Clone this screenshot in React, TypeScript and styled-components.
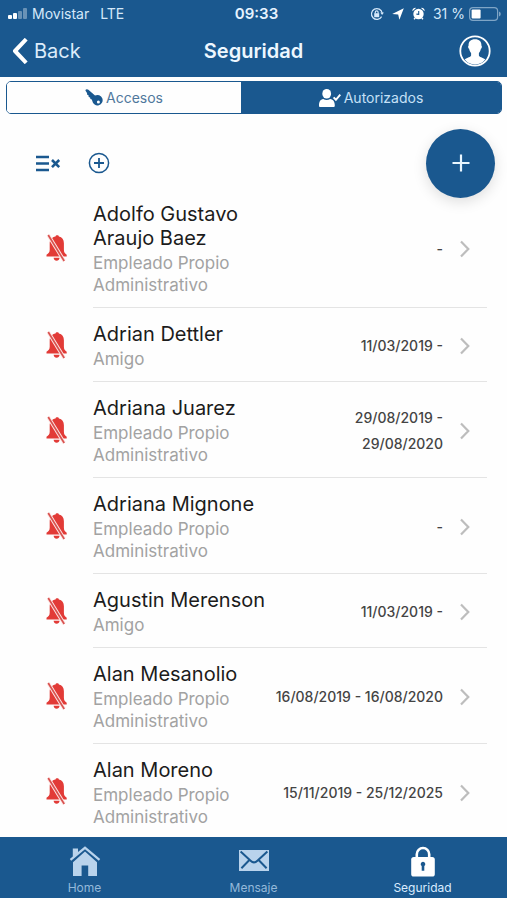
import React from "react";
import styled, { createGlobalStyle } from "styled-components";

const blue = "#1a588f";
const pale = "#b9d3ec";

const GlobalStyle = createGlobalStyle`
  * { box-sizing: border-box; }
  body { margin: 0; background: #fefefe; font-family: Inter, "Liberation Sans", sans-serif; }
  button { font: inherit; border: 0; padding: 0; background: none; color: inherit; cursor: pointer; }
  svg { display: block; flex: none; }
`;

const Page = styled.div`
  min-height: 100vh;
  display: flex;
  flex-direction: column;
  padding-bottom: 2px;
`;

const Header = styled.header`
  background: ${blue};
  color: #fff;
`;

const ThreeColumns = styled.div`
  display: grid;
  grid-template-columns: 1fr auto 1fr;
  align-items: center;
`;

const StatusBar = styled(ThreeColumns)`
  height: 27px;
  padding: 0 6px 0 8px;
  font-size: 14px;
  color: #d5e8fa;
`;

const StatusGroup = styled.div<{ $end?: boolean }>`
  display: flex;
  align-items: center;
  justify-content: ${(p) => (p.$end ? "flex-end" : "flex-start")};
  gap: 4px;
  white-space: nowrap;
`;

const Network = styled.span`
  margin-left: 7px;
`;

const Clock = styled.time`
  padding-left: 4px;
  font-size: 15px;
  font-weight: 600;
  color: #e6f3ff;
`;

const StatusIcons = styled.div`
  display: flex;
  align-items: center;
  gap: 8px;
  margin-right: 4px;
`;

const TitleBar = styled(ThreeColumns)`
  height: 50px;
  padding: 0 12px 2px;
`;

const BackButton = styled.button`
  display: flex;
  align-items: center;
  gap: 6px;
  justify-self: start;
  font-size: 20px;
  color: #dcecfb;
`;

const Title = styled.h1`
  margin: 0;
  font-size: 20px;
  font-weight: 600;
  color: #eef7ff;
`;

const ProfileButton = styled.button`
  justify-self: end;
  margin-right: 4px;
`;

const Segments = styled.div`
  display: flex;
  height: 33px;
  margin: 4px 5px 0 6px;
  border: 1px solid ${blue};
  border-radius: 5px;
  overflow: hidden;
`;

const Segment = styled.button<{ $active?: boolean }>`
  flex: ${(p) => (p.$active ? "10 1 0" : "9 1 0")};
  display: flex;
  align-items: center;
  justify-content: center;
  gap: 3px;
  font-size: 14px;
  background: ${(p) => (p.$active ? blue : "#fefefe")};
  color: ${(p) => (p.$active ? "#c5e0f7" : "#50789c")};
  & svg { color: ${(p) => (p.$active ? "#fff" : blue)}; }
`;

const Toolbar = styled.div`
  display: flex;
  align-items: center;
  gap: 27px;
  height: 50px;
  margin-top: 24px;
  padding: 0 12px 0 35px;
  color: ${blue};
`;

const ToolButton = styled.button`
  display: flex;
`;

const AddButton = styled.button`
  display: grid;
  place-items: center;
  flex: none;
  width: 69px;
  height: 69px;
  margin-left: auto;
  border-radius: 50%;
  background: ${blue};
  color: #fff;
  box-shadow: 0 4px 14px rgba(0, 0, 0, 0.13);
`;

const List = styled.ul`
  flex: 1;
  margin: 0;
  padding: 0;
  list-style: none;
`;

const Row = styled.li`
  display: flex;
  align-items: center;
  padding: 0 20px 0 46px;
`;

const RowBody = styled.div<{ $last?: boolean }>`
  flex: 1;
  display: flex;
  align-items: center;
  min-width: 0;
  margin-left: 26px;
  padding: 14px 17px ${(p) => (p.$last ? "9px" : "11px")} 0;
  border-bottom: ${(p) => (p.$last ? "0" : "1px solid #e4e4e4")};
`;

const Person = styled.div`
  flex: none;
  width: 180px;
`;

const Name = styled.h2`
  margin: 0 0 2px;
  font-size: 20px;
  line-height: 24px;
  font-weight: 400;
  color: #1c1c1c;
`;

const Role = styled.p`
  margin: 0;
  font-size: 17px;
  line-height: 22px;
  color: #a2a2a2;
`;

const Dates = styled.div`
  flex: 1;
  margin-right: 17px;
  text-align: right;
  font-size: 14px;
  font-weight: 500;
  line-height: 26px;
  color: #444;
  white-space: pre;
`;

const TabBar = styled.nav`
  display: grid;
  grid-template-columns: repeat(3, 1fr);
  height: 61px;
  background: ${blue};
`;

const Tab = styled.a<{ $active?: boolean }>`
  display: flex;
  flex-direction: column;
  align-items: center;
  justify-content: flex-end;
  gap: 3px;
  padding-bottom: 2px;
  font-size: 12px;
  line-height: 16px;
  text-decoration: none;
  color: ${(p) => (p.$active ? "#d9ecff" : "#94b9da")};
  & svg { color: ${(p) => (p.$active ? "#fff" : pale)}; }
`;

const SignalIcon = () => (
  <svg width="20" height="12" viewBox="0 0 20 12" fill="#fff">
    <rect x="0" y="7" width="4" height="4" rx="1" />
    <rect x="5" y="5" width="4" height="6" rx="1" />
    <rect x="10" y="3" width="4" height="8" rx="1" opacity=".35" />
    <rect x="15" y="0" width="4" height="11" rx="1" opacity=".35" />
  </svg>
);

const RotationLockIcon = () => (
  <svg width="14" height="14" viewBox="0 0 14 14" fill="none" stroke="currentColor" strokeWidth="1.2">
    <path d="M11.6 9.6A5.4 5.4 0 1 1 12.2 6" />
    <path d="M10.3 5.6h3.6l-1.8 2.5z" fill="currentColor" stroke="none" />
    <rect x="4.2" y="6.2" width="5" height="4" fill="currentColor" stroke="none" />
    <path d="M5.3 6.4V5.2a1.4 1.4 0 0 1 2.8 0v1.2" />
  </svg>
);

const LocationIcon = () => (
  <svg width="12" height="12" viewBox="0 0 12 12" fill="#fff">
    <path d="M11.800.2 7.400 11.800 6.200 6.600.2 6z" />
  </svg>
);

const AlarmIcon = () => (
  <svg width="13" height="13" viewBox="0 0 13 13">
    <g fill="#fff">
      <circle cx="6.5" cy="7" r="5.2" />
      <path d="M.4 4.2A3 3 0 0 1 4 .9zM12.6 4.2A3 3 0 0 0 9 .9zM2.8 10.6l1 1-1.3 1.2-1-1zM10.2 10.6l-1 1 1.3 1.2 1-1z" />
    </g>
    <path d="M6.7 4v3.3L4.4 7.1" fill="none" stroke={blue} strokeWidth="1.1" />
  </svg>
);

const BatteryIcon = () => (
  <svg width="32" height="14" viewBox="0 0 32 14">
    <rect x=".6" y=".6" width="28" height="12.8" rx="3.4" fill="none" stroke="#7fa5c6" strokeWidth="1.2" />
    <rect x="2.6" y="2.4" width="9" height="9.2" rx="1" fill="#fff" />
    <path d="M30 4.6q1.8.6 1.8 2.4T30 9.4z" fill="#7fa5c6" />
  </svg>
);

const BackIcon = () => (
  <svg width="16" height="26" viewBox="0 0 16 26" fill="none" stroke="#fff" strokeWidth="4" strokeLinejoin="round">
    <path d="M14.2 1.2 3 13l11.2 11.8" />
  </svg>
);

const ProfileIcon = () => (
  <svg width="32" height="32" viewBox="0 0 32 32">
    <circle cx="16" cy="16" r="14.7" fill="none" stroke="#fff" strokeWidth="1.8" />
    <path
      d="M16 4.200c4.400 0 6.600 2.500 6.400 6.200.8.5.6 2.700-.5 3.400-.3 2-1.200 3.300-2 4.200v2.600c.2 1.600 3.800 1.800 6.400 4A13 13 0 0 1 16 29.500 13 13 0 0 1 5.700 24.600c2.600-2.200 6.200-2.400 6.400-4V18c-.8-.9-1.700-2.200-2-4.200-1.100-.7-1.300-2.900-.5-3.400-.2-3.700 2-6.200 6.400-6.200z"
      fill="#fff"
    />
  </svg>
);

const KeyIcon = () => (
  <svg width="18" height="18" viewBox="0 0 18 18">
    <path
      d="M.4 1.600Q.6.3 2 .3L3.400.8 10 6.600A5.200 5.200 0 1 1 7.300 12L6.800 10.400 5.400 10 5.100 8.400 3.700 8 3.500 6.200 2.200 5.800 2 3.900z"
      fill="currentColor"
    />
    <circle cx="13.400" cy="13" r="1.500" fill="#fff" />
  </svg>
);

const PersonCheckIcon = () => (
  <svg width="22" height="18" viewBox="0 0 22 18" fill="currentColor">
    <rect x="3.400" y="0" width="8.600" height="9.400" rx="4.200" />
    <path d="M0 16.400c0-3.600 1.200-6 4.300-6.400 2 1.200 4.800 1.200 6.800 0 3.300.4 4.700 2.800 4.700 6.400 0 1-.5 1.500-1.400 1.500h-13C.4 17.900 0 17.400 0 16.400z" />
    <path d="m14.600 8.400 2.300 2.400 4.400-5.200" fill="none" stroke="currentColor" strokeWidth="2" />
  </svg>
);

const ListClearIcon = () => (
  <svg width="26" height="17" viewBox="0 0 26 17" fill="none" stroke="currentColor">
    <path d="M1 2h13M1 8.500h13M1 15h13" strokeWidth="2.400" />
    <path d="m17 5 7.200 7.200M24.200 5 17 12.200" strokeWidth="2.600" />
  </svg>
);

const CirclePlusIcon = () => (
  <svg width="22" height="22" viewBox="0 0 22 22" fill="none" stroke="currentColor" strokeWidth="1.500">
    <circle cx="11" cy="11" r="9.600" />
    <path d="M11 6v10M6 11h10" strokeWidth="1.800" />
  </svg>
);

const PlusIcon = () => (
  <svg width="18" height="18" viewBox="0 0 18 18" fill="none" stroke="#e9f6ff" strokeWidth="2.200">
    <path d="M9 .5v17M.5 9h17" />
  </svg>
);

const BellOffIcon = () => (
  <svg width="21" height="28" viewBox="0 0 21 28">
    <path
      d="M11.200 1.200c1 0 1.600.5 1.700 1.300 3.200.7 5 3.200 5 6.800v6.400c0 2.600 1 3.800 2.800 5.100v1.800H.5v-1.800c1.900-1.300 3.200-2.500 3.200-5.100V9.300c0-3.600 2.400-6.100 5.800-6.800.1-.8.7-1.300 1.700-1.300zM7.600 23.700h6c-.2 2-1.400 3-3 3s-2.800-1-3-3z"
      fill="#e23b37"
    />
    <path d="M2.200 1 18.200 27" stroke="#fde9e8" strokeWidth="3.600" />
    <path d="M2.200 1 18.200 27" stroke="#d9524f" strokeWidth="1.700" />
  </svg>
);

const ChevronIcon = () => (
  <svg width="10" height="18" viewBox="0 0 10 18" fill="none" stroke="#bdbdbd" strokeWidth="2.200">
    <path d="m1 1.500 7.300 7.500L1 16.500" />
  </svg>
);

const HomeIcon = () => (
  <svg width="32" height="31" viewBox="0 0 32 31" fill="currentColor">
    <path d="M16 5.500 28 16.200V30h-8.800V19.500h-6.600V30H4V16.200z" />
    <path d="M16 .3 31.200 13l-1.400 1.700L16 3.200 2.200 14.700.8 13l3-2.600V2.600H9v3.500z" />
  </svg>
);

const MailIcon = () => (
  <svg width="32" height="31" viewBox="0 0 32 31">
    <rect x="1" y="4" width="30" height="21" fill="currentColor" />
    <path
      d="M2.600 5.600 12.600 14.800Q16 18 19.400 14.800L29.400 5.600M3.400 22.200 11.400 14M28.600 22.200 20.600 14"
      fill="none"
      stroke={blue}
      strokeWidth="2"
    />
  </svg>
);

const LockIcon = () => (
  <svg width="26" height="31" viewBox="0 0 26 31">
    <path d="M6.800 13V8.200a6.200 6.200 0 0 1 12.400 0V13" fill="none" stroke="currentColor" strokeWidth="2.600" />
    <rect x="1.200" y="11" width="23.600" height="19.500" rx="2.600" fill="currentColor" />
    <path d="M13 15.800a2.300 2.300 0 0 1 1.300 4.200v4.800h-2.600V20a2.300 2.300 0 0 1 1.300-4.200z" fill={blue} />
  </svg>
);

const employee = ["Empleado Propio", "Administrativo"];

const people = [
  { name: "Adolfo Gustavo Araujo Baez", role: employee, dates: "-" },
  { name: "Adrian Dettler", role: ["Amigo"], dates: "11/03/2019 -" },
  { name: "Adriana Juarez", role: employee, dates: "29/08/2019 -\n29/08/2020" },
  { name: "Adriana Mignone", role: employee, dates: "-" },
  { name: "Agustin Merenson", role: ["Amigo"], dates: "11/03/2019 -" },
  { name: "Alan Mesanolio", role: employee, dates: "16/08/2019 - 16/08/2020" },
  { name: "Alan Moreno", role: employee, dates: "15/11/2019 - 25/12/2025" },
];

export default function App() {
  return (
    <Page>
      <GlobalStyle />
      <Header>
        <StatusBar>
          <StatusGroup>
            <SignalIcon />
            <span>Movistar</span>
            <Network>LTE</Network>
          </StatusGroup>
          <Clock>09:33</Clock>
          <StatusGroup $end>
            <StatusIcons>
              <RotationLockIcon />
              <LocationIcon />
              <AlarmIcon />
            </StatusIcons>
            <span>31 %</span>
            <BatteryIcon />
          </StatusGroup>
        </StatusBar>
        <TitleBar>
          <BackButton type="button">
            <BackIcon />
            Back
          </BackButton>
          <Title>Seguridad</Title>
          <ProfileButton type="button" aria-label="Perfil">
            <ProfileIcon />
          </ProfileButton>
        </TitleBar>
      </Header>

      <Segments>
        <Segment type="button" aria-pressed={false}>
          <KeyIcon />
          Accesos
        </Segment>
        <Segment type="button" aria-pressed $active>
          <PersonCheckIcon />
          Autorizados
        </Segment>
      </Segments>

      <Toolbar>
        <ToolButton type="button" aria-label="Limpiar lista">
          <ListClearIcon />
        </ToolButton>
        <ToolButton type="button" aria-label="Agregar a la lista">
          <CirclePlusIcon />
        </ToolButton>
        <AddButton type="button" aria-label="Nuevo autorizado">
          <PlusIcon />
        </AddButton>
      </Toolbar>

      <List>
        {people.map((person, i) => (
          <Row key={person.name}>
            <BellOffIcon />
            <RowBody $last={i === people.length - 1}>
              <Person>
                <Name>{person.name}</Name>
                {person.role.map((line) => (
                  <Role key={line}>{line}</Role>
                ))}
              </Person>
              <Dates>{person.dates}</Dates>
              <ChevronIcon />
            </RowBody>
          </Row>
        ))}
      </List>

      <TabBar>
        <Tab href="#home">
          <HomeIcon />
          Home
        </Tab>
        <Tab href="#mensaje">
          <MailIcon />
          Mensaje
        </Tab>
        <Tab href="#seguridad" aria-current="page" $active>
          <LockIcon />
          Seguridad
        </Tab>
      </TabBar>
    </Page>
  );
}
